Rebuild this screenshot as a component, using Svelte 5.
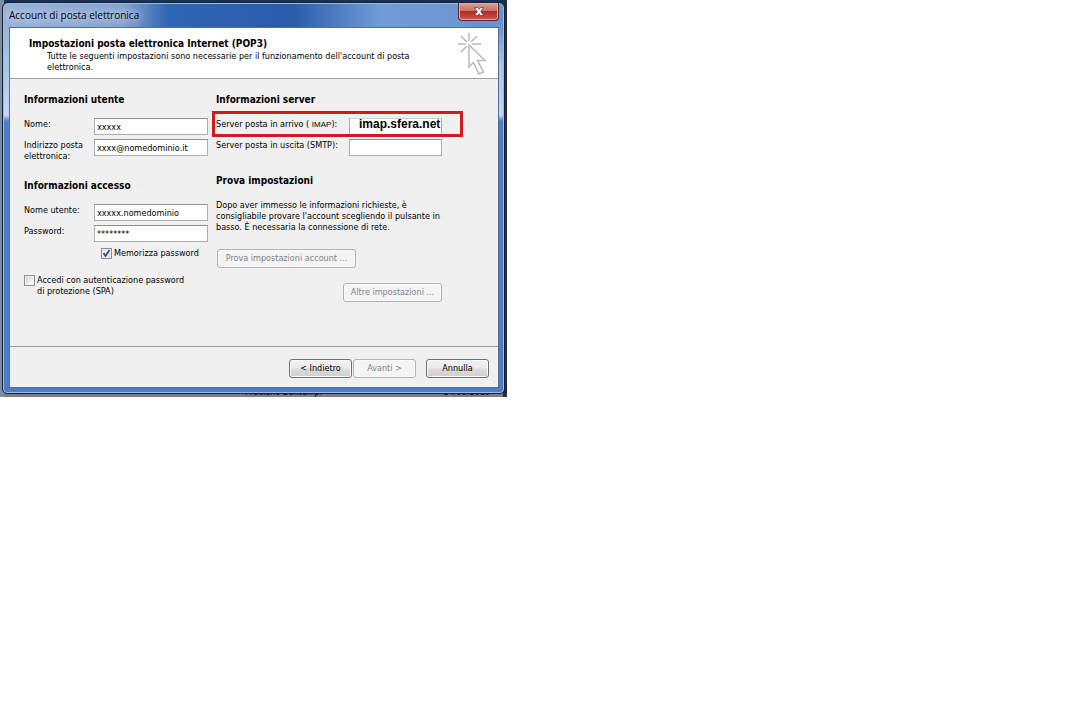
<script>
  let name = $state('xxxxx');
  let email = $state('xxxx@nomedominio.it');
  let user = $state('xxxxx.nomedominio');
  let password = $state('********');
  let incoming = $state('imap.sfera.net');
  let outgoing = $state('');
  let remember = $state(true);
  let spa = $state(false);
</script>

<main class="desktop">
  <div class="behind"><span>Prediano Bontempi</span><span>14/09/2010</span></div>
  <form class="window" onsubmit={(e) => e.preventDefault()}>
    <header class="titlebar">
      <h1>Account di posta elettronica</h1>
      <button type="button" class="close" aria-label="Chiudi">
        <svg width="10" height="9" viewBox="0 0 10 9">
          <path d="M0.5 0.5H3.6L5 2.3L6.4 0.5H9.5L6.7 4.5L9.5 8.5H6.4L5 6.7L3.6 8.5H0.5L3.3 4.5Z" fill="#fff" stroke="#5d3438" stroke-width=".7" />
        </svg>
      </button>
    </header>
    <div class="client">
      <div class="intro">
        <div>
          <h2>Impostazioni posta elettronica Internet (POP3)</h2>
          <p>Tutte le seguenti impostazioni sono necessarie per il funzionamento dell'account di posta elettronica.</p>
        </div>
        <svg class="pointer" width="30" height="44" viewBox="0 0 30 44" fill="none" stroke="#b9b9b9" stroke-width="1.5">
          <path d="M12 1V9M1 12H9M15 12H24M4 4L10 10M20 4L14 10M4 20L10 14" />
          <path d="M12 13L28 28.500H20.500L26.500 40L22 42L16.500 30.500L12 35Z" fill="#fff" />
        </svg>
      </div>

      <div class="body">
        <div class="column left">
          <section>
            <h3>Informazioni utente</h3>
            <div class="row"><label for="name">Nome:</label><input id="name" type="text" bind:value={name} /></div>
            <div class="row"><label for="email">Indirizzo posta elettronica:</label><input id="email" type="text" bind:value={email} /></div>
          </section>
          <section class="access">
            <h3>Informazioni accesso</h3>
            <div class="row"><label for="user">Nome utente:</label><input id="user" type="text" bind:value={user} /></div>
            <div class="row"><label for="password">Password:</label><input id="password" type="text" autocomplete="off" bind:value={password} /></div>
            <label class="check remember"><input type="checkbox" bind:checked={remember} /><span>Memorizza password</span></label>
            <label class="check spa"><input type="checkbox" bind:checked={spa} /><span>Accedi con autenticazione password di protezione (SPA)</span></label>
          </section>
        </div>
        <div class="column right">
          <section>
            <h3>Informazioni server</h3>
            <div class="row marked"><label for="incoming">Server posta in arrivo ( <small>IMAP</small>):</label><input id="incoming" type="text" bind:value={incoming} /></div>
            <div class="row"><label for="outgoing">Server posta in uscita (SMTP):</label><input id="outgoing" type="text" bind:value={outgoing} /></div>
          </section>
          <section class="test">
            <h3>Prova impostazioni</h3>
            <p>Dopo aver immesso le informazioni richieste, è consigliabile provare l'account scegliendo il pulsante in basso. È necessaria la connessione di rete.</p>
            <button type="button" class="btn try" disabled>Prova impostazioni account ...</button>
            <button type="button" class="btn more" disabled>Altre impostazioni ...</button>
          </section>
        </div>
      </div>

      <footer>
        <button type="button" class="btn">&lt; Indietro</button>
        <button type="button" class="btn" disabled>Avanti &gt;</button>
        <button type="button" class="btn cancel">Annulla</button>
      </footer>
    </div>
  </form>
</main>

<style>
  :global(body) {
    margin: 0;
    background: #fff;
  }

  .desktop,
  .desktop * {
    box-sizing: border-box;
  }

  .desktop {
    position: relative;
    max-width: 507px;
    padding: 2px 2px 3px;
    overflow: hidden;
    background: linear-gradient(90deg, #7d8da3 0 4px, transparent 4px calc(100% - 4px), #232d3f calc(100% - 4px)),
      linear-gradient(#193052 0 20px, #7d7d83 20px);
    color: #000;
    font: 9px/11px 'DejaVu Sans Condensed', 'DejaVu Sans', sans-serif;
  }

  h1,
  h2,
  h3,
  p {
    margin: 0;
  }

  h2,
  h3 {
    font-size: 10px;
    line-height: 12px;
  }

  .behind {
    position: absolute;
    right: 17px;
    bottom: 0;
    left: 245px;
    display: flex;
    justify-content: space-between;
    line-height: 9px;
  }

  .window {
    position: relative;
    padding: 0 5px 5px 6px;
    border: 1px solid #142136;
    border-radius: 6px 6px 5px 5px;
    background: linear-gradient(transparent 24px, #a9c2e6 60px, #c5d8f0 112px, #4d7fc7 118px, #4b7cc4) 0 0 / 100% 100%,
      linear-gradient(90deg, #9ab3d6, #86a3d0 24%, #2f65b3 33%, #2a5caa 58%, #6f9bd7 75%, #6a94cf);
    box-shadow: inset 0 0 0 1px #9dbbe5;
  }

  .titlebar {
    display: flex;
    justify-content: space-between;
    height: 24px;
  }

  h1 {
    padding-top: 6px;
    font: 400 10px/13px 'Open Sans', sans-serif;
    text-shadow: 0 0 6px #d5e3f5, 0 0 8px #d5e3f5;
  }

  .close {
    display: grid;
    place-items: center;
    width: 41px;
    height: 18px;
    padding: 0;
    border: 1px solid #5b2731;
    border-top: 0;
    border-radius: 0 0 4px 4px;
    background: linear-gradient(#dba29b, #cd6e65 45%, #ae2e27 50%, #c8584a);
    box-shadow: inset 0 0 0 1px #e6aaa5;
  }

  .client {
    border: 1px solid #536f97;
    background: #f0f0f0;
  }

  .intro {
    display: flex;
    justify-content: space-between;
    height: 51px;
    padding: 4px 11px 0 19px;
    border-bottom: 1px solid #a0a0a0;
    background: #fff;
  }

  h2 {
    padding-top: 6px;
  }

  .intro p {
    max-width: 400px;
    padding: 1px 0 0 18px;
  }

  .pointer {
    flex: none;
  }

  .body {
    display: grid;
    grid-template-columns: 184px 226px;
    gap: 8px;
    min-height: 267px;
    padding: 15px 14px 0;
  }

  h3 {
    margin-bottom: 12px;
  }

  .row {
    display: grid;
    grid-template-columns: minmax(0, 1fr) 114px;
    height: 17px;
    margin-bottom: 4px;
  }

  .right .row {
    grid-template-columns: minmax(0, 1fr) 93px;
  }

  .row label {
    padding-top: 1px;
    white-space: nowrap;
  }

  .left .row label {
    white-space: normal;
  }

  .row input {
    width: 100%;
    height: 17px;
    padding: 0 2px;
    border: 1px solid #abadb3;
    border-top-color: #8e9096;
    border-radius: 0;
    background: #fff;
    color: #000;
    font: inherit;
  }

  .marked {
    position: relative;
  }

  .marked::after {
    position: absolute;
    inset: -7px -21px -2px -4px;
    border: 3px solid #cf1b20;
    pointer-events: none;
    content: '';
  }

  .row #incoming {
    padding: 0 0 5px 9px;
    border-top-color: #d0d1d4;
    font: bold 12px/12px 'Liberation Sans', sans-serif;
  }

  small {
    font: 8px/8px 'Liberation Sans', sans-serif;
  }

  .access {
    padding-top: 20px;
  }

  .test {
    padding-top: 15px;
  }

  .check {
    display: flex;
    gap: 2px;
  }

  .check input {
    appearance: none;
    flex: none;
    width: 11px;
    height: 11px;
    margin: 0;
    border: 1px solid #8e8f8f;
    background: linear-gradient(135deg, #cfd3d8, #fff) content-box #f4f4f4;
    padding: 1px;
  }

  .check input:checked {
    background: url("data:image/svg+xml,%3Csvg xmlns='http://www.w3.org/2000/svg' viewBox='0 0 9 9'%3E%3Cpath d='M1.500 4L3.500 7L7.500 1' fill='none' stroke='%23324b91' stroke-width='1.700'/%3E%3C/svg%3E") #e8ebf0;
  }

  .remember {
    margin: 6px 0 0 77px;
    white-space: nowrap;
  }

  .spa {
    max-width: 166px;
    margin-top: 16px;
  }

  .test h3 {
    margin-bottom: 13px;
  }

  .test p {
    margin-bottom: 16px;
  }

  .btn {
    display: block;
    min-width: 63px;
    height: 19px;
    padding: 0 5px;
    border: 1px solid #707070;
    border-radius: 3px;
    background: linear-gradient(#f2f2f2, #ebebeb 48%, #dcdcdc 52%, #cfcfcf);
    box-shadow: inset 0 0 0 1px #fafafa;
    color: #000;
    font: inherit;
    white-space: nowrap;
  }

  .btn:disabled {
    border-color: #adb2b5;
    background: #f4f4f4;
    color: #838383;
  }

  .try {
    width: 139px;
    margin-left: 1px;
  }

  .more {
    width: 99px;
    margin: 15px 0 0 auto;
  }

  footer {
    display: flex;
    justify-content: flex-end;
    gap: 1px;
    height: 41px;
    padding: 12px 9px 0;
    border-top: 1px solid #9aa0a0;
  }

  .cancel {
    margin-left: 9px;
  }
</style>
